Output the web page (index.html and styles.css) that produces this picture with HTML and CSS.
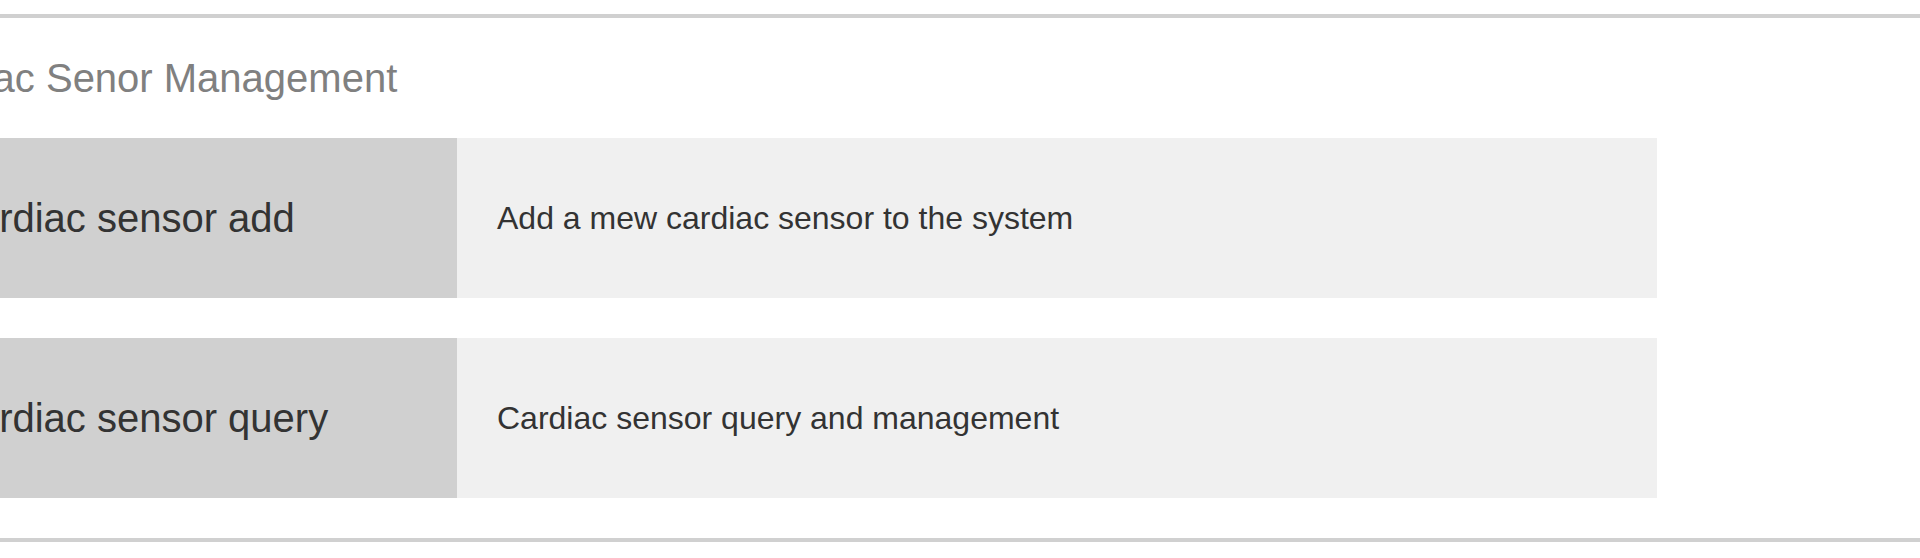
FILE: index.html
```html
<!DOCTYPE html>
<html lang="en">
<head>
<meta charset="utf-8">
<title>Cardiac Senor Management</title>
<link rel="stylesheet" href="styles.css">
</head>
<body>
<section class="panel">
  <div class="content">
    <h2 class="title">Cardiac Senor Management</h2>
    <div class="rows">
      <a class="row" href="#">
        <div class="row-name">Cardiac sensor add</div>
        <div class="row-desc">Add a mew cardiac sensor to the system</div>
      </a>
      <a class="row" href="#">
        <div class="row-name">Cardiac sensor query</div>
        <div class="row-desc">Cardiac sensor query and management</div>
      </a>
    </div>
  </div>
</section>
</body>
</html>
```

FILE: styles.css
```css
html, body {
  margin: 0;
  padding: 0;
  background: #ffffff;
  overflow: hidden;
}

body {
  font-family: "Liberation Sans", Arial, Helvetica, sans-serif;
  color: #333333;
  padding-top: 14px;
}

.panel {
  border-top: 4px solid #d0d0d0;
  border-bottom: 4px solid #d0d0d0;
  padding: 38px 0 40px;
}

.content {
  margin-left: -103px;
}

.title {
  margin: 0 0 38px;
  font-size: 40px;
  line-height: 44px;
  font-weight: normal;
  color: #808080;
}

.rows {
  display: flex;
  flex-direction: column;
  gap: 40px;
}

.row {
  display: flex;
  width: 1760px;
  height: 160px;
  text-decoration: none;
  color: #333333;
}

.row-name {
  width: 560px;
  flex: none;
  box-sizing: border-box;
  padding-left: 51px;
  background: #d0d0d0;
  display: flex;
  align-items: center;
  font-size: 40px;
  line-height: 1.15;
}

.row-desc {
  flex: 1;
  box-sizing: border-box;
  padding-left: 40px;
  background: #f0f0f0;
  display: flex;
  align-items: center;
  font-size: 32px;
  line-height: 1.15;
}
```
